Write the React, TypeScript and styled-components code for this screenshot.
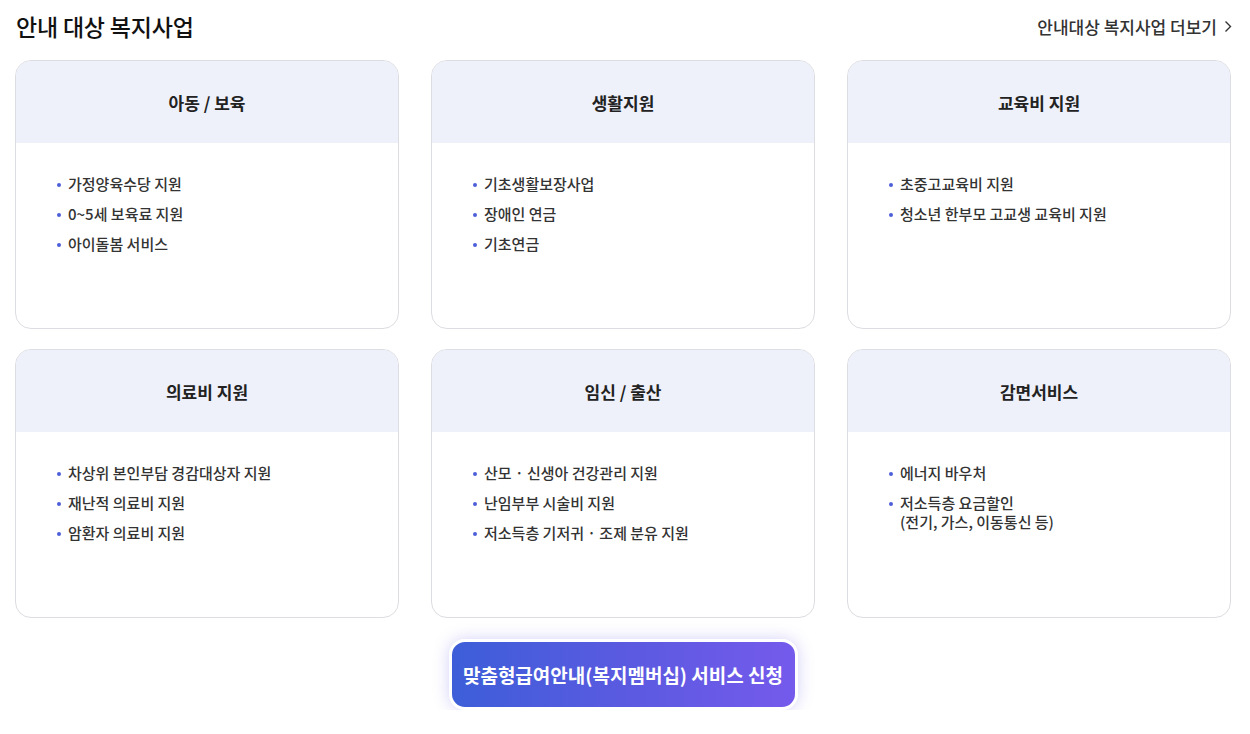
import React from "react";
import styled, { createGlobalStyle } from "styled-components";

const Global = createGlobalStyle`
  * { box-sizing: border-box; }
  body { margin: 0; background: #fff; font-family: "Noto Sans CJK KR", "Noto Sans", sans-serif; color: #222; }
`;

const Page = styled.div`
  width: 1250px;
  height: 710px;
  overflow: hidden;
  padding: 5px 18px 0 15px;
`;

const TopBar = styled.div`
  display: flex;
  align-items: center;
  justify-content: space-between;
  height: 42px;
  margin-bottom: 13px;
`;

const Title = styled.h2`
  margin: 0 0 0 1px;
  font-size: 23px;
  font-weight: 500;
  color: #111;
  letter-spacing: -0.2px;
`;

const MoreLink = styled.a`
  display: flex;
  align-items: center;
  gap: 7px;
  font-size: 17px;
  font-weight: 500;
  color: #333;
  text-decoration: none;
  letter-spacing: 0;
`;

const Grid = styled.div`
  display: grid;
  grid-template-columns: repeat(3, 384px);
  column-gap: 32px;
  row-gap: 20px;
`;

const Card = styled.div`
  height: 269px;
  border: 1px solid #dcdde2;
  border-radius: 16px;
  overflow: hidden;
  background: #fff;
`;

const CardHead = styled.div`
  height: 82px;
  background: #eef1fa;
  display: flex;
  align-items: center;
  justify-content: center;
  font-size: 17px;
  font-weight: 700;
  color: #222;
`;

const List = styled.ul`
  list-style: none;
  margin: 0;
  padding: 31px 0 0 41px;
  display: flex;
  flex-direction: column;
  gap: 10px;
`;

const Item = styled.li`
  position: relative;
  padding-left: 11px;
  font-size: 15px;
  line-height: 20px;
  font-weight: 500;
  color: #333;
  &::before {
    content: "";
    position: absolute;
    left: 0;
    top: 9px;
    width: 4px;
    height: 4px;
    border-radius: 50%;
    background: #4d5fd8;
  }
`;

const Sub = styled.span`
  display: block;
  line-height: 16px;
  padding-top: 1px;
`;

const BtnRow = styled.div`
  display: flex;
  justify-content: center;
  padding-top: 21px;
  padding-right: 1px;
`;

const ApplyBtn = styled.button`
  width: 349px;
  height: 71px;
  border: 3px solid #fff;
  border-radius: 16px;
  background: linear-gradient(90deg, #3d5ed8 0%, #5a5ae0 50%, #755aec 100%);
  box-shadow: 0 0 16px rgba(110, 100, 230, 0.3);
  color: #fff;
  font-family: "Noto Sans CJK KR", sans-serif;
  font-size: 19px;
  font-weight: 700;
  letter-spacing: 0;
  cursor: pointer;
`;

type CardData = { title: string; items: (string | [string, string])[] };

const cards: CardData[] = [
  { title: "아동 / 보육", items: ["가정양육수당 지원", "0~5세 보육료 지원", "아이돌봄 서비스"] },
  { title: "생활지원", items: ["기초생활보장사업", "장애인 연금", "기초연금"] },
  { title: "교육비 지원", items: ["초중고교육비 지원", "청소년 한부모 고교생 교육비 지원"] },
  { title: "의료비 지원", items: ["차상위 본인부담 경감대상자 지원", "재난적 의료비 지원", "암환자 의료비 지원"] },
  { title: "임신 / 출산", items: ["산모 · 신생아 건강관리 지원", "난임부부 시술비 지원", "저소득층 기저귀 · 조제 분유 지원"] },
  { title: "감면서비스", items: ["에너지 바우처", ["저소득층 요금할인", "(전기, 가스, 이동통신 등)"]] },
];

export default function App() {
  return (
    <>
      <Global />
      <Page>
        <TopBar>
          <Title>안내 대상 복지사업</Title>
          <MoreLink href="#">
            안내대상 복지사업 더보기
            <svg width="8" height="13" viewBox="0 0 8 13" fill="none">
              <path d="M1.5 1.5L6.5 6.5L1.5 11.5" stroke="#333" strokeWidth="1.4" />
            </svg>
          </MoreLink>
        </TopBar>
        <Grid>
          {cards.map((c) => (
            <Card key={c.title}>
              <CardHead>{c.title}</CardHead>
              <List>
                {c.items.map((it, i) =>
                  Array.isArray(it) ? (
                    <Item key={i}>
                      {it[0]}
                      <Sub>{it[1]}</Sub>
                    </Item>
                  ) : (
                    <Item key={i}>{it}</Item>
                  )
                )}
              </List>
            </Card>
          ))}
        </Grid>
        <BtnRow>
          <ApplyBtn>맞춤형급여안내(복지멤버십) 서비스 신청</ApplyBtn>
        </BtnRow>
      </Page>
    </>
  );
}
